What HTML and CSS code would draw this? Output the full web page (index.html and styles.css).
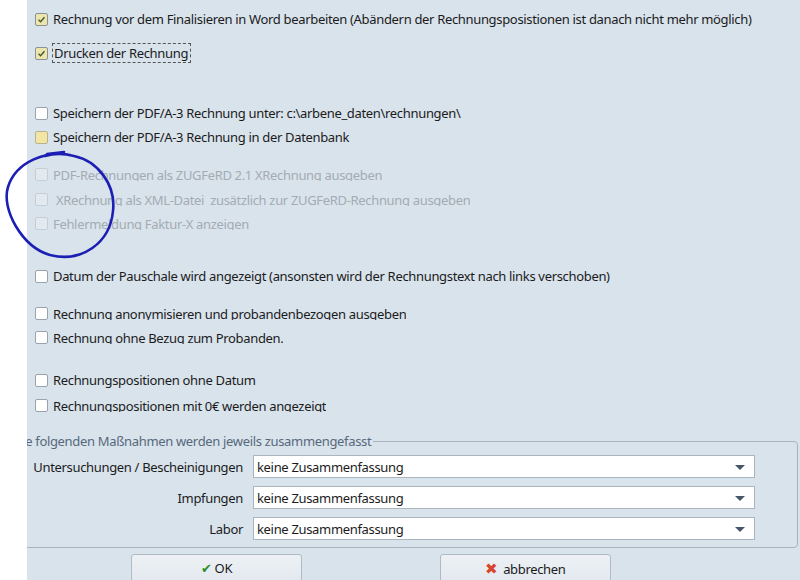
FILE: index.html
```html
<!DOCTYPE html>
<html lang="de">

<head>
    <meta charset="UTF-8">
    <title>Rechnungsoptionen</title>
    <link rel="stylesheet" href="styles.css">
</head>

<body>
    <div class="panel">
        <div class="options">
            <div class="row r1">
                <span class="box checked"><svg viewBox="0 0 13 13"><path d="M3 6.8 L5.4 9.2 L10 3.8" /></svg></span>
                <span class="txt">Rechnung vor dem Finalisieren in Word bearbeiten (Abändern der Rechnungsposistionen ist danach nicht mehr möglich)</span>
            </div>
            <div class="row r2">
                <span class="box checked"><svg viewBox="0 0 13 13"><path d="M3 6.8 L5.4 9.2 L10 3.8" /></svg></span>
                <span class="txt focus">Drucken der Rechnung</span>
            </div>

            <div class="row r3">
                <span class="box"></span>
                <span class="txt">Speichern der PDF/A-3 Rechnung unter: c:\arbene_daten\rechnungen\</span>
            </div>
            <div class="row r4">
                <span class="box hover"></span>
                <span class="txt">Speichern der PDF/A-3 Rechnung in der Datenbank</span>
            </div>

            <div class="row r5 disabled clip">
                <span class="box"></span>
                <span class="txt">PDF-Rechnungen als ZUGFeRD 2.1 XRechnung ausgeben</span>
            </div>
            <div class="row r6 disabled clip">
                <span class="box"></span>
                <span class="txt">&nbsp;XRechnung als XML-Datei&nbsp; zusätzlich zur ZUGFeRD-Rechnung ausgeben</span>
            </div>
            <div class="row r7 disabled clip">
                <span class="box"></span>
                <span class="txt">Fehlermeldung Faktur-X anzeigen</span>
            </div>

            <div class="row r8">
                <span class="box"></span>
                <span class="txt">Datum der Pauschale wird angezeigt (ansonsten wird der Rechnungstext nach links verschoben)</span>
            </div>

            <div class="row r9 clip">
                <span class="box"></span>
                <span class="txt">Rechnung anonymisieren und probandenbezogen ausgeben</span>
            </div>
            <div class="row r10 clip">
                <span class="box"></span>
                <span class="txt">Rechnung ohne Bezug zum Probanden.</span>
            </div>

            <div class="row r11">
                <span class="box"></span>
                <span class="txt">Rechnungspositionen ohne Datum</span>
            </div>
            <div class="row r12 clip">
                <span class="box"></span>
                <span class="txt">Rechnungspositionen mit 0€ werden angezeigt</span>
            </div>
        </div>

        <fieldset class="group">
            <legend>Die folgenden Maßnahmen werden jeweils zusammengefasst</legend>
            <div class="combos">
                <label>Untersuchungen / Bescheinigungen</label>
                <div class="combo"><span>keine Zusammenfassung</span><i class="arrow"></i></div>
                <label>Impfungen</label>
                <div class="combo"><span>keine Zusammenfassung</span><i class="arrow"></i></div>
                <label>Labor</label>
                <div class="combo"><span>keine Zusammenfassung</span><i class="arrow"></i></div>
            </div>
        </fieldset>

        <div class="buttons">
            <button class="btn"><span class="ok-icon">✔</span>OK</button>
            <button class="btn"><span class="x-icon">✖</span>abbrechen</button>
        </div>

        <!-- Markierung (Handzeichnung) -->
        <svg class="scribble" width="130" height="120" viewBox="0 0 130 120">
            <path d="M70 8 C48 3 16 14 8 40 C1 62 22 100 50 108 C82 116 110 96 113 64 C116 38 98 14 74 9 C62 6 52 7 45 9" />
            <path d="M47 7 L64 5" />
        </svg>
    </div>
</body>

</html>
```

FILE: styles.css
```css
html, body {
    margin: 0;
    height: 100%;
    background: #ffffff;
}

body {
    font-family: "Noto Sans", "Open Sans", sans-serif;
    font-size: 13px;
    letter-spacing: -0.33px;
    color: #1b1b1b;
}

.panel {
    margin-left: 27px;
    height: 580px;
    background: #d9e3ec;
    overflow: hidden;
}

/* Checkbox-Zeilen */
.options {
    padding-top: 7px;
    padding-left: 8px;
}

.row {
    display: flex;
    align-items: center;
    height: 24px;
}

.r2 { margin-top: 10px; }
.r3 { margin-top: 36px; }
.r5 { margin-top: 13px; }
.r6 { margin-top: 1px; }
.r8 { margin-top: 29px; }
.r9 { margin-top: 13px; }
.r11 { margin-top: 19px; }
.r12 { margin-top: 1px; }

.box {
    width: 11px;
    height: 11px;
    border: 1px solid #99a3ad;
    border-radius: 2px;
    background: #ffffff;
    margin-right: 5px;
    flex-shrink: 0;
}

.box svg {
    display: block;
    width: 11px;
    height: 11px;
}

.box path {
    fill: none;
    stroke: #3f5a33;
    stroke-width: 1.6;
}

.box.checked {
    background: #ece6ad;
    border-color: #8c9196;
}

.box.hover {
    background: #f3e6a4;
    border-color: #b9b28e;
}

.txt {
    line-height: 16px;
    white-space: nowrap;
}

.clip .txt {
    height: 14px;
    overflow: hidden;
}

.focus {
    outline: 1px dashed #555;
    outline-offset: 1px;
    margin-left: 1px;
    padding-right: 1px;
}

.disabled .txt {
    color: #a3abb3;
}

.disabled .box {
    background: #e2e9ef;
    border-color: #c5cdd5;
}

/* Gruppenrahmen */
.group {
    margin: 16px 2px 0 -21px;
    padding: 6px 0 7px 0;
    border: 1px solid #a8b3be;
    border-radius: 4px;
}

.group legend {
    margin-left: 6px;
    padding: 0 2px 0 0;
    color: #56697b;
    line-height: 16px;
}

.combos {
    display: grid;
    grid-template-columns: 236px 502px;
    column-gap: 10px;
    row-gap: 8px;
    align-items: center;
}

.combos label {
    text-align: right;
    white-space: nowrap;
}

.combo {
    height: 21px;
    border: 1px solid #aab5c0;
    background: #ffffff;
    display: flex;
    align-items: center;
    padding-left: 3px;
    position: relative;
}

.arrow {
    position: absolute;
    right: 9px;
    top: 9px;
    width: 0;
    height: 0;
    border-left: 5px solid transparent;
    border-right: 5px solid transparent;
    border-top: 5px solid #46566a;
}

/* Buttons */
.buttons {
    display: flex;
    gap: 138px;
    padding: 6px 0 0 104px;
}

.btn {
    width: 171px;
    height: 28px;
    border: 1px solid #b0bac4;
    border-radius: 3px;
    background: linear-gradient(#edf1f5, #e3e9ef);
    font-family: inherit;
    font-size: 13px;
    letter-spacing: inherit;
    color: #1b1b1b;
    padding: 0;
}

.ok-icon {
    color: #2e8b2e;
    margin-right: 3px;
}

.x-icon {
    color: #d8452f;
    font-size: 15px;
    margin-right: 5px;
}

/* Markierung */
.scribble {
    position: absolute;
    left: 0;
    top: 147px;
}

.scribble path {
    fill: none;
    stroke: #1c1fb4;
    stroke-width: 2.6;
    stroke-linecap: round;
}
```
